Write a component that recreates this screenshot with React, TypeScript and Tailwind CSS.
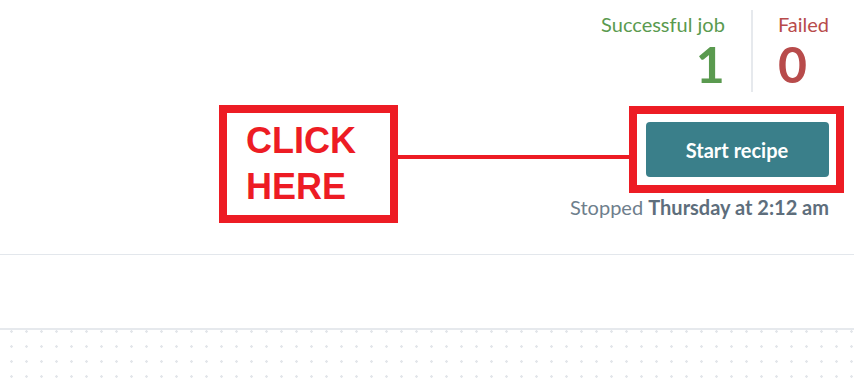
export default function App() {
  return (
    <div className="w-[854px] h-[380px] overflow-hidden bg-white font-['Lato','Noto_Sans',sans-serif]">
      <div className="h-[255px] border-b border-[#e3e7ec] flex justify-end pr-[25px]">
        <div className="flex flex-col items-end pt-[10px]">
          {/* stats */}
          <div className="flex h-[82px]">
            <div className="flex flex-col items-end pr-[26px] pt-[2px]">
              <span className="text-[20px] leading-[24px] text-[#5a9a4f]">Successful job</span>
              <span className="text-[50px] leading-[56px] font-bold text-[#5a9a4f]">1</span>
            </div>
            <div className="w-[2px] bg-[#e6e9ed]" />
            <div className="flex flex-col items-start pl-[25px] pt-[2px]">
              <span className="text-[20px] leading-[24px] text-[#b84b4b]">Failed</span>
              <span className="text-[50px] leading-[56px] font-bold text-[#b84b4b]">0</span>
            </div>
          </div>

          {/* annotation + button */}
          <div className="flex items-start h-[88px] mt-[13px] -mr-[15px]">
            <div className="w-[179px] h-[118px] shrink-0 border-[8px] border-[#ed1c24] flex flex-col justify-center pl-[19px] font-['Liberation_Sans',Arial,sans-serif] font-bold text-[36px] leading-[46px] text-[#ed1c24]">
              <span>CLICK</span>
              <span>HERE</span>
            </div>
            <div className="w-[231px] h-[4px] bg-[#ed1c24] mt-[50px]" />
            <div className="mt-[1px] w-[215px] h-[87px] border-[8px] border-[#ed1c24] flex items-center justify-center pl-[1px]">
              <button className="w-[183px] h-[55px] rounded-[4px] bg-[#3a7f8a] text-white text-[20px] font-bold">
                Start recipe
              </button>
            </div>
          </div>

          <div className="mt-[2px] text-[20px] leading-[24px] text-[#6e7e8c]">
            Stopped <span className="font-bold text-[#5e6e7c]">Thursday at 2:12 am</span>
          </div>
        </div>
      </div>
      <div className="h-[75px] border-b-2 border-[#e6e9ed]" />
      <div className="h-[48px] bg-[radial-gradient(circle,#e3e6ea_1px,transparent_1.5px)] bg-[length:15px_15px] bg-[position:4px_-6px]" />
    </div>
  );
}
